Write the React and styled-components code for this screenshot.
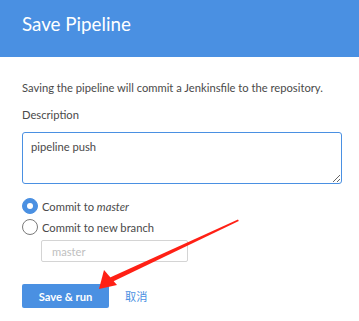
import React from "react";
import styled, { createGlobalStyle } from "styled-components";

const Global = createGlobalStyle`
  html, body { margin: 0; padding: 0; background: #fff; }
  body { font-family: Lato, "Noto Sans CJK SC", sans-serif; color: #4a4a4a; }
  * { box-sizing: border-box; }
`;

const Page = styled.div`
  position: relative;
  width: 359px;
  height: 321px;
  overflow: hidden;
`;

const Header = styled.header`
  height: 57px;
  background: #4a90e2;
  padding: 12px 22px 0;
`;

const Title = styled.h1`
  margin: 0;
  font-size: 18.8px;
  font-weight: 400;
  color: #fff;
  line-height: 24px;
`;

const Body = styled.div`
  padding: 23px 17px 0 22px;
  display: flex;
  flex-direction: column;
  align-items: flex-start;
`;

const Intro = styled.p`
  margin: 0;
  font-size: 11.2px;
  line-height: 16px;
  white-space: nowrap;
`;

const Label = styled.label`
  margin-top: 11px;
  font-size: 11.2px;
  line-height: 16px;
`;

const TextArea = styled.textarea`
  margin-top: 9px;
  width: 320px;
  height: 52px;
  border: 1px solid #4a90e2;
  border-radius: 3px;
  padding: 6px 8px;
  font-family: Lato, sans-serif;
  font-size: 11.2px;
  line-height: 16px;
  color: #4a4a4a;
  outline: none;
  resize: vertical;
`;

const Options = styled.div`
  margin-top: 14px;
  display: flex;
  flex-direction: column;
  gap: 5px;
`;

const Option = styled.div`
  display: flex;
  align-items: center;
  gap: 4px;
  font-size: 11.2px;
  height: 16px;
`;

const Radio = styled.span`
  width: 16px;
  height: 16px;
  border-radius: 50%;
  flex: none;
  display: flex;
  align-items: center;
  justify-content: center;
  background: ${(p) => (p.$checked ? "#4a90e2" : "#fff")};
  border: 1px solid ${(p) => (p.$checked ? "#4a90e2" : "#7a7a7a")};
  &::after {
    content: "";
    display: ${(p) => (p.$checked ? "block" : "none")};
    width: 6px;
    height: 6px;
    border-radius: 50%;
    background: #fff;
  }
`;

const BranchInput = styled.input`
  margin: 5px 0 0 19px;
  width: 147px;
  height: 22px;
  border: 1px solid #d4d4d4;
  border-radius: 2px;
  padding: 0 10px;
  font-family: Lato, sans-serif;
  font-size: 11.2px;
  color: #4a4a4a;
  &::placeholder { color: #c0c0c0; }
`;

const Actions = styled.div`
  margin-top: 22px;
  display: flex;
  align-items: center;
  gap: 16px;
`;

const PrimaryButton = styled.button`
  width: 87px;
  height: 24px;
  border: none;
  border-radius: 2px;
  background: #4a90e2;
  color: #fff;
  font-family: Lato, sans-serif;
  font-size: 11.2px;
  font-weight: 700;
  padding: 0;
`;

const CancelLink = styled.a`
  color: #4a90e2;
  font-family: "Noto Sans CJK SC", sans-serif;
  font-size: 11.2px;
  text-decoration: none;
`;

const Arrow = styled.svg`
  position: absolute;
  left: 0;
  top: 0;
  pointer-events: none;
`;

export default function App() {
  return (
    <>
      <Global />
      <Page>
        <Header>
          <Title>Save Pipeline</Title>
        </Header>
        <Body>
          <Intro>Saving the pipeline will commit a Jenkinsfile to the repository.</Intro>
          <Label>Description</Label>
          <TextArea defaultValue="pipeline push" />
          <Options>
            <Option>
              <Radio $checked />
              <span>
                Commit to <em>master</em>
              </span>
            </Option>
            <Option>
              <Radio />
              <span>Commit to new branch</span>
            </Option>
          </Options>
          <BranchInput placeholder="master" />
          <Actions>
            <PrimaryButton>Save &amp; run</PrimaryButton>
            <CancelLink href="#">取消</CancelLink>
          </Actions>
        </Body>
        <Arrow width="359" height="321" viewBox="0 0 359 321">
          <polygon points="238,219.5 238.8,221 113,281.5 110,277.5" fill="#ff2015" />
          <polygon points="99,289 104,270 117,285" fill="#ff2015" />
        </Arrow>
      </Page>
    </>
  );
}
